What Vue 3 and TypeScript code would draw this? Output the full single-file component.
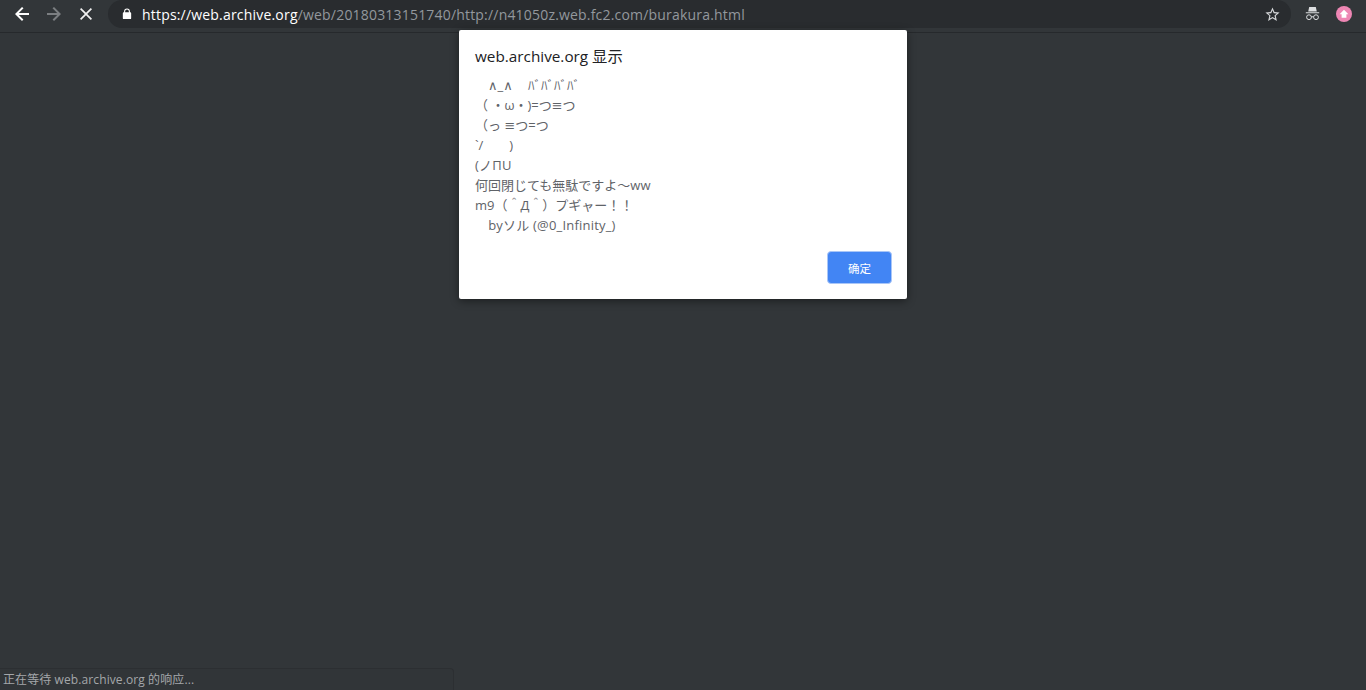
<script setup lang="ts">
interface Line {
  text: string
  wide?: boolean
}

const lines: Line[] = [
  { text: '　∧_∧　\u2009ﾊﾞﾊﾞﾊﾞﾊﾞ' },
  { text: '（ ・ω・)=つ≡つ' },
  { text: '（っ ≡つ=つ' },
  { text: '`/　　)' },
  { text: '(ノΠU', wide: true },
  { text: '何回閉じても無駄ですよ～ww' },
  { text: 'm9（＾Д＾）プギャー！！' },
  { text: '　byソル (@0_Infinity_)', wide: true },
]
</script>

<template>
  <div class="page">
    <header class="toolbar">
      <svg class="nav" width="24" height="24" viewBox="0 0 24 24" aria-hidden="true">
        <path d="M19 11H8.8l4.7-4.7L12 5l-7 7 7 7 1.4-1.4L8.8 13H19z" fill="#ffffff" />
      </svg>
      <svg class="nav" width="24" height="24" viewBox="0 0 24 24" aria-hidden="true">
        <path d="M5 11h10.2l-4.7-4.7L12 5l7 7-7 7-1.4-1.4 4.6-4.6H5z" fill="#7b7e81" />
      </svg>
      <svg class="nav" width="24" height="24" viewBox="0 0 24 24" aria-hidden="true">
        <path d="M18 7.2 16.8 6 12 10.8 7.2 6 6 7.2 10.8 12 6 16.8 7.2 18 12 13.2 16.8 18 18 16.8 13.2 12z" fill="#f1f1f1" />
      </svg>
      <div class="omnibox">
        <svg class="lock" width="10" height="12" viewBox="0 0 12 14" aria-hidden="true">
          <path d="M10 5H9.5V3.8a3.5 3.5 0 0 0-7 0V5H2a1 1 0 0 0-1 1v6a1 1 0 0 0 1 1h8a1 1 0 0 0 1-1V6a1 1 0 0 0-1-1ZM3.8 5V3.8a2.2 2.2 0 0 1 4.4 0V5Z" fill="#ffffff" />
        </svg>
        <span class="url"><span class="url-main">https://web.archive.org</span>/web/20180313151740/http://n41050z.web.fc2.com/burakura.html</span>
        <svg class="star" width="17" height="17" viewBox="0 0 24 24" aria-hidden="true">
          <path d="M22 9.2l-7.2-.6L12 2 9.2 8.6 2 9.2l5.5 4.7L5.8 21l6.2-3.7 6.2 3.7-1.6-7.1zM12 15.4l-3.8 2.3 1-4.3-3.3-2.9 4.4-.4L12 6.1l1.7 4 4.4.4-3.3 2.9 1 4.3z" fill="#d5d7d9" />
        </svg>
      </div>
      <svg class="incognito" width="15" height="16" viewBox="0 0 15 16" aria-hidden="true">
        <path d="M4.2 1h6.6l1 4.6H3.2zM.8 6.2h13.4v1H.8z" fill="#dcdee0" />
        <circle cx="4" cy="11.2" r="2.4" fill="none" stroke="#dcdee0" stroke-width="1" />
        <circle cx="11" cy="11.2" r="2.4" fill="none" stroke="#dcdee0" stroke-width="1" />
        <path d="M6.3 10.8h2.4" stroke="#dcdee0" stroke-width="1" />
      </svg>
      <div class="avatar">
        <svg width="10" height="10" viewBox="0 0 10 10" aria-hidden="true">
          <path d="M5 .8 9.4 5.2H7.4v3.6H2.6V5.2H.6z" fill="#ffffff" />
        </svg>
      </div>
    </header>

    <section class="dialog">
      <h1 class="title">web.archive.org 显示</h1>
      <div class="message">
        <div v-for="(line, i) in lines" :key="i" class="line" :class="{ wide: line.wide }">{{ line.text }}</div>
      </div>
      <div class="actions">
        <button class="ok" type="button">确定</button>
      </div>
    </section>

    <div class="status">正在等待 web.archive.org 的响应...</div>
  </div>
</template>

<style>
html, body { margin: 0; background: #323639; overflow: hidden; }
</style>

<style scoped>
.page {
  position: relative;
  width: 1366px;
  height: 690px;
  background: #323639;
  overflow: hidden;
  font-family: "Open Sans", "Noto Sans CJK SC", sans-serif;
}
.toolbar {
  display: flex;
  align-items: center;
  box-sizing: border-box;
  height: 33px;
  padding: 0 2px 5px 10px;
  background: #323639;
  border-bottom: 1px solid #26292c;
}
.nav { margin-right: 8px; flex: none; }
.omnibox {
  display: flex;
  align-items: center;
  flex: 1;
  height: 28px;
  margin-left: 2px;
  margin-top: 1px;
  margin-right: -1px;
  padding: 0 10px 0 14px;
  border-radius: 14px;
  background: #292c2f;
}
.lock { flex: none; margin-right: 10px; }
.url {
  flex: 1;
  font-size: 14px;
  color: #93989d;
  white-space: nowrap;
  letter-spacing: 0.19px;
}
.url-main { color: #ffffff; }
.star { flex: none; }
.incognito { flex: none; margin: 0 16px 0 15px; }
.avatar {
  display: flex;
  align-items: center;
  justify-content: center;
  flex: none;
  width: 16px;
  height: 16px;
  margin-right: 12px;
  border-radius: 50%;
  background: #ee86b4;
}
.dialog {
  position: absolute;
  left: 459px;
  top: 30px;
  box-sizing: border-box;
  width: 448px;
  height: 269px;
  padding: 15px 16px 16px;
  background: #ffffff;
  border-radius: 2px;
  box-shadow: 0 2px 8px rgba(0, 0, 0, 0.45);
}
.title {
  margin: 0;
  font-size: 15.3px;
  font-weight: 400;
  line-height: 22px;
  color: #202124;
}
.message {
  margin-top: 8px;
  font-family: "Open Sans", "DejaVu Sans", "Noto Sans CJK TC", sans-serif;
  font-size: 13px;
  line-height: 20px;
  color: #5f6368;
}
.line { white-space: pre; }
.wide { letter-spacing: 0.2px; }
.actions {
  display: flex;
  justify-content: flex-end;
  margin-top: 16px;
  margin-right: -1px;
}
.ok {
  width: 65px;
  height: 33px;
  padding: 0;
  border: 1px solid #a9c6f7;
  border-radius: 4px;
  background: #4285f4;
  color: #ffffff;
  font-family: inherit;
  font-size: 11.5px;
}
.status {
  position: absolute;
  left: 0;
  bottom: 0;
  box-sizing: border-box;
  width: 454px;
  height: 22px;
  padding: 2px 3px;
  font-size: 12px;
  letter-spacing: 0.1px;
  line-height: 18px;
  color: #a4a7aa;
  background: #313538;
  border: 1px solid #2c2f32;
  border-left: 0;
  border-bottom: 0;
  border-top-right-radius: 4px;
}
</style>
